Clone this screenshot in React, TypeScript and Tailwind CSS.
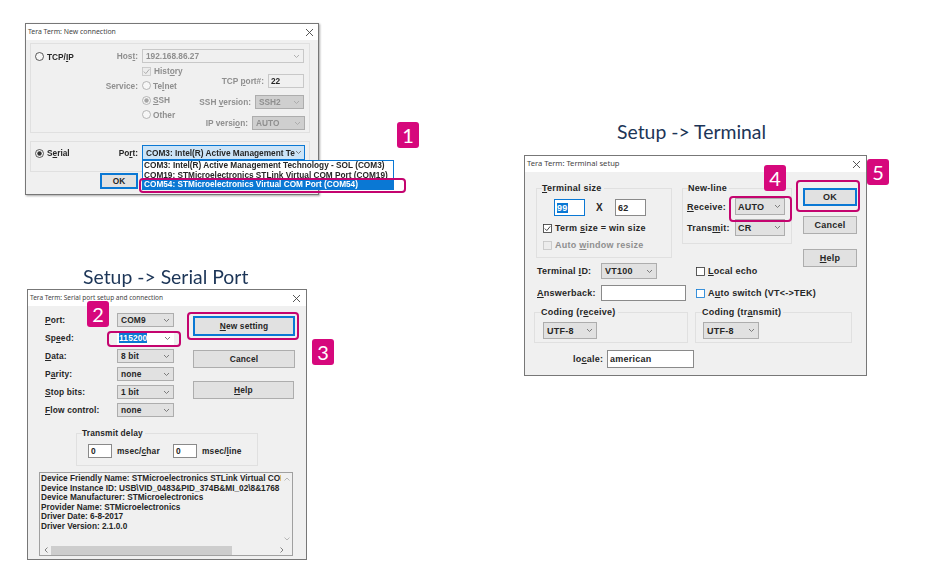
import React from "react";

const txt = "leading-[10px] font-bold whitespace-nowrap font-['Liberation_Sans',sans-serif]";

function L({ children, dis, className = "" }: { children: React.ReactNode; dis?: boolean; className?: string }) {
  return <span className={`${txt} ${dis ? "text-[#8f8f8f]" : "text-[#262626]"} ${className}`}>{children}</span>;
}

function Chev({ dis }: { dis?: boolean }) {
  return (
    <svg width="7" height="5" viewBox="0 0 7 5" className="shrink-0">
      <path d="M1 1 L3.5 3.5 L6 1" fill="none" stroke={dis ? "#a8a8a8" : "#707070"} strokeWidth="0.9" />
    </svg>
  );
}

function Sel({ w, h = 14, v, dis, className = "" }: { w: number; h?: number; v: string; dis?: boolean; className?: string }) {
  return (
    <div
      style={{ width: w, height: h }}
      className={`flex items-center justify-between pl-[3px] pr-[3px] shrink-0 overflow-hidden border border-[#adadad] ${dis ? "bg-[#cfcfcf]" : "bg-[#e1e1e1]"} ${className}`}
    >
      <L dis={dis}>{v}</L>
      <Chev dis={dis} />
    </div>
  );
}

function Inp({ w, h = 14, v, className = "", children }: { w: number; h?: number; v?: string; className?: string; children?: React.ReactNode }) {
  return (
    <div style={{ width: w, height: h }} className={`flex items-center pl-[2px] shrink-0 bg-white border border-[#8a8a8a] ${className}`}>
      {children ?? (v ? <L>{v}</L> : null)}
    </div>
  );
}

function Btn({ w, h = 18, children, focus }: { w: number; h?: number; children: React.ReactNode; focus?: boolean }) {
  return (
    <div
      style={{ width: w, height: h }}
      className={`flex items-center justify-center shrink-0 bg-[#e1e1e1] ${focus ? "border-2 border-[#0a78d4]" : "border border-[#adadad]"}`}
    >
      <L>{children}</L>
    </div>
  );
}

function Radio({ on, dis }: { on?: boolean; dis?: boolean }) {
  const c = dis ? "#a5a5a5" : "#333333";
  return (
    <svg width="9" height="9" viewBox="0 0 9 9" className="shrink-0">
      <circle cx="4.5" cy="4.5" r="4" fill="#f6f6f6" stroke={c} strokeWidth="0.8" />
      {on && <circle cx="4.5" cy="4.5" r="2.2" fill={c} />}
    </svg>
  );
}

function Check({ on, dis, blue }: { on?: boolean; dis?: boolean; blue?: boolean }) {
  return (
    <svg width="9" height="9" viewBox="0 0 9 9" className="shrink-0">
      <rect x="0.5" y="0.5" width="8" height="8" fill={dis ? "#ececec" : "#fff"} stroke={blue ? "#0a78d4" : dis ? "#c4c4c4" : "#333"} strokeWidth="0.8" />
      {on && <path d="M1.8 4.6 L3.8 6.6 L7.3 2.3" fill="none" stroke={dis ? "#a5a5a5" : "#333"} strokeWidth="0.9" />}
    </svg>
  );
}

function Title({ t, size, pr = "pr-[5px]" }: { t: string; size: string; pr?: string }) {
  return (
    <div className={`flex items-center justify-between h-[16px] bg-white pl-[2px] ${pr} shrink-0`}>
      <span className={`${size} tracking-normal font-normal leading-none whitespace-nowrap text-[#444] font-['Noto_Sans',sans-serif]`}>{t}</span>
      <svg width="9" height="9" viewBox="0 0 9 9">
        <path d="M1 1 L8 8 M8 1 L1 8" stroke="#444" strokeWidth="0.9" />
      </svg>
    </div>
  );
}

function Group({ className = "", label, labelX = 6, children }: { className?: string; label?: React.ReactNode; labelX?: number; children: React.ReactNode }) {
  return (
    <div className={`relative border border-[#e0e0e0] ${className}`}>
      {label && (
        <span style={{ left: labelX }} className="absolute -top-[6px] bg-[#f0f0f0] pr-[2px] flex">
          <L>{label}</L>
        </span>
      )}
      {children}
    </div>
  );
}

function Badge({ n, className }: { n: string; className: string }) {
  return (
    <div className={`absolute w-[22px] h-[26px] rounded-[3px] bg-[#d6087c] flex items-center justify-center text-white text-[20px] leading-none font-['Lato',sans-serif] ${className}`}>
      {n}
    </div>
  );
}

const hl = "absolute border-[2.5px] border-[#c4046f] rounded-[4px]";
const heading = "absolute whitespace-nowrap text-[#1c3557] text-[19.4px] leading-none font-['Lato',sans-serif]";
const win = "absolute flex flex-col bg-[#f0f0f0] border border-[#777]";

function NewConnection() {
  return (
    <div className={`${win} text-[8.3px] left-[25px] top-[23px] w-[294px] h-[172px] shadow-[1px_1px_2px_rgba(0,0,0,0.35)]`}>
      <Title t="Tera Term: New connection" size="text-[6.9px]" pr="pr-[4px]" />
      <div className="px-[4px] pt-[3px] flex flex-col gap-[8px]">
        <Group className="h-[90px] w-[280px] flex">
          <div className="w-[82px] shrink-0 pl-[4px] pt-[8px] flex gap-[3px] items-start">
            <Radio />
            <L>TCP/<u>I</u>P</L>
          </div>
          <div className="w-[192px] shrink-0 flex flex-col pt-[5px]">
            <div className="flex items-center gap-[4px]">
              <L dis className="w-[25px] text-right"><span>Hos<u>t</u>:</span></L>
              <Sel w={162} h={14} v="192.168.86.27" dis className="!bg-[#f0f0f0] !border-[#c8c8c8]" />
            </div>
            <div className="flex">
              <div className="w-[100px] shrink-0 flex flex-col ml-[-32px]">
                <div className="flex items-center gap-[3px] h-[14px] mt-[1px] ml-[61px]"><Check on dis /><L dis>Hist<u>o</u>ry</L></div>
                <div className="flex items-center h-[15px]">
                  <L dis className="w-[57px] text-right mr-[4px]">Service:</L>
                  <div className="flex items-center gap-[2px]"><Radio dis /><L dis>Te<u>l</u>net</L></div>
                </div>
                <div className="flex items-center gap-[2px] h-[14px] ml-[61px]"><Radio on dis /><L dis><u>S</u>SH</L></div>
                <div className="flex items-center gap-[2px] h-[15px] ml-[61px]"><Radio dis /><L dis>Other</L></div>
              </div>
              <div className="w-[124px] shrink-0 flex flex-col items-end gap-[7px] mt-[11px]">
                <div className="flex items-center gap-[4px] mr-[1px]"><L dis>TCP <u>p</u>ort#:</L><Inp w={36} h={14} v="22" className="!bg-[#f0f0f0] !border-[#c8c8c8]" /></div>
                <div className="flex items-center gap-[4px] mr-[1px]"><L dis>SSH <u>v</u>ersion:</L><Sel w={49} h={14} v="SSH2" dis /></div>
                <div className="flex items-center gap-[4px]"><L dis>IP versi<u>o</u>n:</L><Sel w={53} h={14} v="AUTO" dis /></div>
              </div>
            </div>
          </div>
        </Group>
        <Group className="h-[31px] w-[280px] flex items-start">
          <div className="w-[87px] shrink-0 pl-[4px] pt-[6px] flex gap-[3px] items-center">
            <Radio on />
            <L>S<u>e</u>rial</L>
          </div>
          <div className="flex items-center gap-[4px] pt-[3px]">
            <L className="w-[20px] text-right">Po<u>r</u>t:</L>
            <Sel w={163} h={15} v="COM3: Intel(R) Active Management Te" className="!bg-[#cce4f7] !border-[#0a78d4]" />
          </div>
        </Group>
      </div>
      <div className="ml-[74px] mt-[1px]"><Btn w={38} h={16} focus>OK</Btn></div>
    </div>
  );
}

function SerialPort() {
  const rows: [React.ReactNode, string][] = [
    [<><u>P</u>ort:</>, "COM9"],
    [<>Sp<u>e</u>ed:</>, "115200"],
    [<><u>D</u>ata:</>, "8 bit"],
    [<>P<u>a</u>rity:</>, "none"],
    [<><u>S</u>top bits:</>, "1 bit"],
    [<><u>F</u>low control:</>, "none"],
  ];
  return (
    <div className={`${win} text-[8.4px] tracking-[0.15px] left-[27px] top-[289px] w-[280px] h-[271px]`}>
      <Title t="Tera Term: Serial port setup and connection" size="text-[6.5px]" />
      <div className="flex mt-[7px]">
        <div className="flex flex-col gap-[4px] pl-[17px] w-[165px]">
          {rows.map(([l, v], i) => (
            <div key={i} className="flex items-center h-[14px]">
              <L className="w-[72px]">{l}</L>
              {i === 1 ? (
                <div className="w-[57px] h-[14px] shrink-0 bg-white flex items-center justify-between pr-[3px] pl-[2px]">
                  <span className={`${txt} bg-[#0a78d4] text-white`}>{v}</span>
                  <Chev />
                </div>
              ) : (
                <Sel w={57} v={v} />
              )}
            </div>
          ))}
        </div>
        <div className="flex flex-col mt-[3px]">
          <Btn w={102} h={20} focus><u>N</u>ew setting</Btn>
          <div className="mt-[14px]"><Btn w={102} h={18}>Cancel</Btn></div>
          <div className="mt-[13px]"><Btn w={101} h={18}><u>H</u>elp</Btn></div>
        </div>
      </div>
      <Group label="Transmit delay" labelX={5} className="ml-[48px] mt-[16px] w-[182px] h-[33px] flex items-center pl-[11px] pt-[2px]">
        <Inp w={24} h={14} v="0" />
        <L className="ml-[5px] w-[56px]">msec/<u>c</u>har</L>
        <Inp w={24} h={14} v="0" />
        <L className="ml-[5px]">msec/<u>l</u>ine</L>
      </Group>
      <div className="ml-[11px] mt-[6px] w-[254px] h-[84px] border border-[#a0a0a0] bg-[#f0f0f0] flex flex-col overflow-hidden text-[8.25px] tracking-normal">
        <div className="flex flex-1 min-h-0">
          <div className="flex-1 min-w-0 overflow-hidden pl-[1px] pt-[1px] flex flex-col">
            {[
              "Device Friendly Name: STMicroelectronics STLink Virtual COM",
              "Device Instance ID: USB\\VID_0483&PID_374B&MI_02\\8&1768",
              "Device Manufacturer: STMicroelectronics",
              "Provider Name: STMicroelectronics",
              "Driver Date: 6-8-2017",
              "Driver Version: 2.1.0.0",
            ].map((s) => (
              <L key={s} className="block h-[9.6px]">{s}</L>
            ))}
          </div>
          <div className="w-[11px] flex flex-col items-center justify-between py-[4px] bg-[#f0f0f0] shrink-0">
            <svg width="6" height="4" viewBox="0 0 6 4"><path d="M0.5 3.5 L3 1 L5.5 3.5" fill="none" stroke="#a8a8a8" strokeWidth="0.8" /></svg>
            <svg width="6" height="4" viewBox="0 0 6 4"><path d="M0.5 0.5 L3 3 L5.5 0.5" fill="none" stroke="#a8a8a8" strokeWidth="0.8" /></svg>
          </div>
        </div>
        <div className="h-[10px] flex items-center shrink-0 pl-[4px] pr-[4px]">
          <svg width="4" height="6" viewBox="0 0 4 6"><path d="M3.5 0.5 L1 3 L3.5 5.5" fill="none" stroke="#666" strokeWidth="0.8" /></svg>
          <div className="w-[181px] h-[9px] bg-[#cdcdcd] ml-[3px]" />
          <div className="flex-1" />
          <svg width="4" height="6" viewBox="0 0 4 6" className="mr-[4px]"><path d="M0.5 0.5 L3 3 L0.5 5.5" fill="none" stroke="#666" strokeWidth="0.8" /></svg>
        </div>
      </div>
    </div>
  );
}

function TerminalSetup() {
  return (
    <div className={`${win} text-[9px] tracking-[0.25px] left-[524px] top-[155px] w-[343px] h-[221px]`}>
      <Title t="Tera Term: Terminal setup" size="text-[7.6px]" />
      <div className="flex mt-[16px] pl-[11px]">
        <Group label={<><u>T</u>erminal size</>} labelX={5} className="w-[136px] h-[70px] flex flex-col">
          <div className="flex items-center mt-[10px] pl-[17px]">
            <Inp w={31} h={17} className="!border-[#0a78d4]"><span className={`${txt} bg-[#0a78d4] text-white`}>99</span></Inp>
            <L className="ml-[11px] w-[19px] text-[10px]">X</L>
            <Inp w={31} h={17} v="62" />
          </div>
          <div className="flex items-center gap-[3px] mt-[7px] pl-[6px]"><Check on /><L>Term <u>s</u>ize = win size</L></div>
          <div className="flex items-center gap-[3px] mt-[7px] pl-[6px]"><Check dis /><L dis>Auto <u>w</u>indow resize</L></div>
        </Group>
        <Group label="New-line" labelX={5} className="ml-[10px] w-[110px] h-[56px] flex flex-col">
          <div className="flex items-center mt-[9px] pl-[4px]">
            <L className="w-[48px]"><u>R</u>eceive:</L>
            <Sel w={50} h={17} v="AUTO" className="!pl-[2px]" />
          </div>
          <div className="flex items-center mt-[4px] pl-[4px]">
            <L className="w-[48px]">Trans<u>m</u>it:</L>
            <Sel w={50} h={17} v="CR" className="!pl-[2px]" />
          </div>
        </Group>
        <div className="ml-[11px] flex flex-col">
          <Btn w={54} h={18} focus>OK</Btn>
          <div className="mt-[10px]"><Btn w={54} h={18}>Cancel</Btn></div>
          <div className="mt-[15px]"><Btn w={54} h={18}><u>H</u>elp</Btn></div>
        </div>
      </div>
      <div className="flex items-center mt-[-4px] pl-[12px] h-[16px]">
        <L className="w-[64px]">Terminal <u>I</u>D:</L>
        <Sel w={56} h={16} v="VT100" />
        <div className="ml-[39px] flex items-center gap-[3px]"><Check /><L><u>L</u>ocal echo</L></div>
      </div>
      <div className="flex items-center mt-[6px] pl-[12px] h-[16px]">
        <L className="w-[64px]"><u>A</u>nswerback:</L>
        <Inp w={85} h={16} />
        <div className="ml-[10px] flex items-center gap-[3px]"><Check blue /><L>A<u>u</u>to switch (VT&lt;-&gt;TEK)</L></div>
      </div>
      <div className="flex mt-[11px] pl-[9px] gap-[7px]">
        <Group label={<>Coding (r<u>e</u>ceive)</>} labelX={6} className="w-[154px] h-[31px] pl-[8px] pt-[9px]">
          <Sel w={54} h={17} v="UTF-8" />
        </Group>
        <Group label={<>Coding (tr<u>a</u>nsmit)</>} labelX={6} className="w-[157px] h-[31px] pl-[7px] pt-[9px]">
          <Sel w={56} h={17} v="UTF-8" />
        </Group>
      </div>
      <div className="flex items-center mt-[7px] pl-[48px]">
        <L className="w-[34px]">lo<u>c</u>ale:</L>
        <Inp w={87} h={18} v="american" />
      </div>
    </div>
  );
}

export default function App() {
  return (
    <div className="relative w-[926px] h-[579px] bg-white overflow-hidden">
      <div className="blur-[0.4px]">
        <NewConnection />
        <SerialPort />
        <TerminalSetup />
      </div>

      <div className="absolute left-[142px] top-[160px] w-[252px] h-[30px] bg-white border border-[#0a78d4] flex flex-col blur-[0.4px] text-[8.25px]">
        <L className="pl-[1px] block h-[9.5px]">COM3: Intel(R) Active Management Technology - SOL (COM3)</L>
        <L className="pl-[1px] block h-[9.5px]">COM19: STMicroelectronics STLink Virtual COM Port (COM19)</L>
        <span className={`${txt} text-white bg-[#0a78d4] pl-[1px] h-[9.5px] block`}>COM54: STMicroelectronics Virtual COM Port (COM54)</span>
      </div>

      <div className={`${heading} left-[83px] top-[267px]`}>Setup -&gt; Serial Port</div>
      <div className={`${heading} left-[617px] top-[122px]`}>Setup -&gt; Terminal</div>

      <div className={`${hl} left-[139px] top-[178px] w-[267px] h-[15px]`} />
      <div className={`${hl} left-[107px] top-[331px] w-[74px] h-[16px]`} />
      <div className={`${hl} left-[187px] top-[312px] w-[112px] h-[28px]`} />
      <div className={`${hl} left-[729px] top-[196px] w-[63px] h-[26px]`} />
      <div className={`${hl} left-[796px] top-[180px] w-[64px] h-[32px]`} />

      <Badge n="1" className="left-[397px] top-[122px]" />
      <Badge n="2" className="left-[87px] top-[301px]" />
      <Badge n="3" className="left-[312px] top-[339px]" />
      <Badge n="4" className="left-[764px] top-[165px]" />
      <Badge n="5" className="left-[867px] top-[159px]" />
    </div>
  );
}
